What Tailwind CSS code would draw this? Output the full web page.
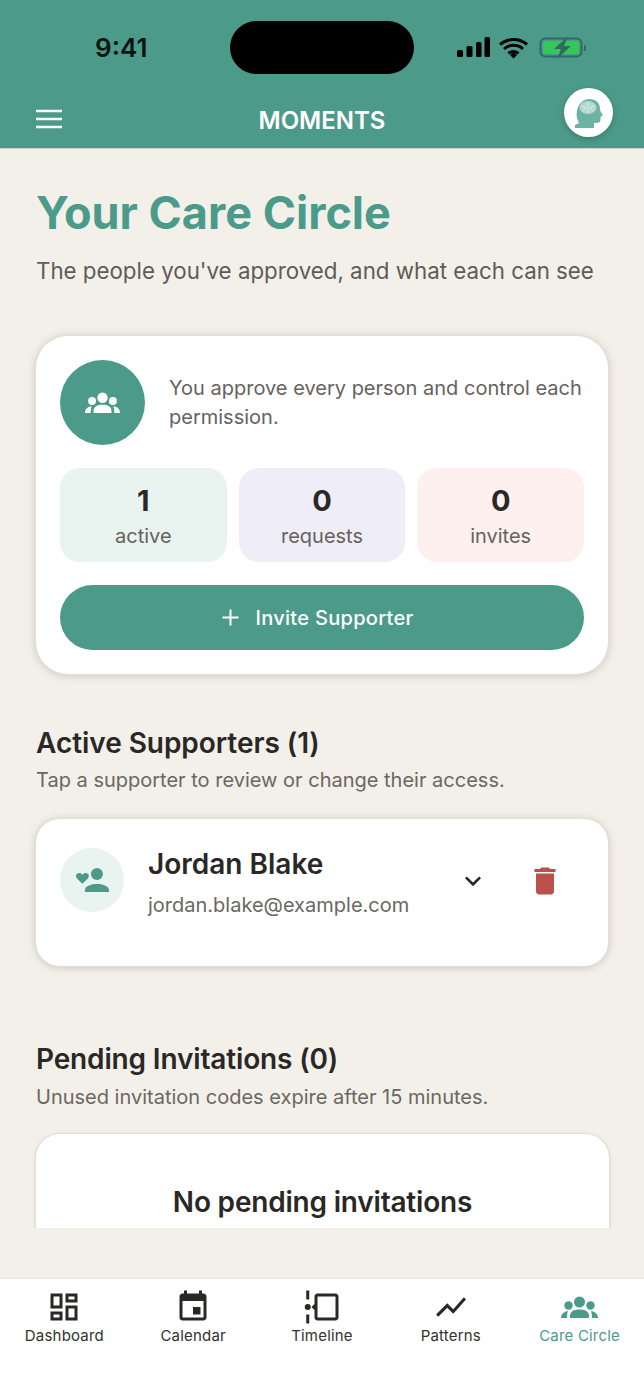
<!DOCTYPE html>
<html lang="en">
<head>
<meta charset="utf-8">
<script src="https://cdn.jsdelivr.net/npm/@tailwindcss/browser@4"></script>
<title>Moments</title>
</head>
<body class="m-0 bg-[#f3f0ea] font-['Inter',sans-serif] text-[#2a2826]">
<div class="w-[644px] h-[1400px] flex flex-col overflow-hidden">
  <header class="h-[149px] shrink-0 bg-[#4c9a8a] border-b border-[#c9d3cd] flex flex-col">
    <div class="h-[94px] flex items-start relative">
      <span class="absolute left-[95px] top-[32px] text-[26px] leading-[32px] font-semibold text-[#0a1512]">9:41</span>
      <div class="absolute left-[230px] top-[21px] w-[184px] h-[53px] rounded-full bg-black"></div>
      <svg class="absolute left-[456px] top-[36px]" width="130" height="24" viewBox="0 0 130 24">
        <rect x="1" y="14" width="6" height="7" rx="1.500" fill="#000"/>
        <rect x="10.500" y="10" width="6" height="11" rx="1.500" fill="#000"/>
        <rect x="20" y="6" width="5.500" height="15" rx="1.500" fill="#000"/>
        <rect x="28.500" y="1" width="5.500" height="20" rx="1.500" fill="#000"/>
        <path d="M44 8.500 a21 21 0 0 1 27 0 M48 13 a14 14 0 0 1 19 0 M52.500 17.500 a7 7 0 0 1 10 0" fill="none" stroke="#000" stroke-width="3"/>
        <path d="M54 19 l3.500 -2.500 l3.500 2.500 l-3.500 3.500z" fill="#000"/>
        <rect x="84.500" y="2.500" width="41" height="18" rx="5" fill="none" stroke="#2f6b60" stroke-width="2"/>
        <rect x="87" y="5" width="36" height="13" rx="3" fill="#34c759"/>
        <path d="M128 9 a3 3 0 0 1 0 6z" fill="#2f6b60"/>
        <path d="M112 0 l-14 13 h7 l-4 10 l14 -13 h-7 l4 -10z" fill="#2f6b60"/>
      </svg>
    </div>
    <div class="h-[54px] flex items-center relative">
      <svg class="absolute left-[36px] top-[15px]" width="26" height="20" viewBox="0 0 26 20">
        <path d="M0 2 H26 M0 10 H26 M0 18 H26" stroke="#fff" stroke-width="2.600"/>
      </svg>
      <span class="w-full text-center text-[24px] leading-[30px] font-semibold text-white mt-[-1px]">MOMENTS</span>
      <div class="absolute left-[564px] top-[-6px] w-[49px] h-[49px] rounded-full bg-white shadow-[0_2px_6px_rgba(0,0,0,0.2)] flex items-center justify-center">
        <svg width="30" height="30" viewBox="0 0 30 30">
          <path d="M1 30 V27 C2 26 4 26 5 25 C3 21 2 18 3 13 C4 6 9 1 15 1 C22 1 26 5 26 11 C26 14 28 15 29 17 L26.500 19 V22 C26.500 24 25 25 22 25 H20 V30z" fill="#6db3a2"/>
          <ellipse cx="14" cy="9.500" rx="8.500" ry="6.500" fill="#b4d8ce"/>
          <path d="M14 4 V15 M8 8 L12 10 L9 13 M20 8 L16 10 L19 13" stroke="#e6f2ee" stroke-width="0.800" fill="none"/>
        </svg>
      </div>
    </div>
  </header>

  <main class="h-[1079px] shrink-0 overflow-hidden px-[36px]">
    <h1 class="mt-[37px] text-[45px] leading-[54px] font-bold text-[#4c9a8a] whitespace-nowrap">Your Care Circle</h1>
    <p class="mt-[17px] text-[22.3px] leading-[28px] text-[#5f5b56] whitespace-nowrap">The people you've approved, and what each can see</p>

    <section class="mt-[51px] w-[572px] rounded-[32px] bg-white p-[24px] shadow-[0_0_0_1px_#e3dfd7,0_1px_10px_rgba(90,80,60,0.3)]">
      <div class="flex items-center gap-[24px]">
        <div class="w-[85px] h-[85px] shrink-0 rounded-full bg-[#4c9a8a] flex items-center justify-center">
          <svg width="35" height="21" viewBox="0 0 37 22" fill="#fff"><circle cx="18.500" cy="6" r="5.500"/><circle cx="7.500" cy="9.500" r="4.200"/><circle cx="29.500" cy="9.500" r="4.200"/><path d="M9 22 V20 C9 15.500 13 13.500 18.500 13.500 S28 15.500 28 20 V22z"/><path d="M0 22 C0 18 3 15.500 7 15 C6.300 17 6 19 6 22z"/><path d="M37 22 C37 18 34 15.500 30 15 C30.700 17 31 19 31 22z"/></svg>
        </div>
        <p class="text-[20px] leading-[29px] text-[#66625d]">You approve every person and control each permission.</p>
      </div>
      <div class="mt-[23px] grid grid-cols-3 gap-[12px]">
        <div class="h-[94px] rounded-[20px] bg-[#e9f3f0] flex flex-col items-center pt-[15px]">
          <span class="text-[29px] leading-[36px] font-bold">1</span>
          <span class="text-[20px] leading-[26px] text-[#66625d] mt-[4px]">active</span>
        </div>
        <div class="h-[94px] rounded-[20px] bg-[#efedf8] flex flex-col items-center pt-[15px]">
          <span class="text-[29px] leading-[36px] font-bold">0</span>
          <span class="text-[20px] leading-[26px] text-[#66625d] mt-[4px]">requests</span>
        </div>
        <div class="h-[94px] rounded-[20px] bg-[#fdf0ee] flex flex-col items-center pt-[15px]">
          <span class="text-[29px] leading-[36px] font-bold">0</span>
          <span class="text-[20px] leading-[26px] text-[#66625d] mt-[4px]">invites</span>
        </div>
      </div>
      <button class="mt-[23px] w-full h-[65px] rounded-full bg-[#4c9a8a] flex items-center justify-center gap-[16px] pr-[8px] text-white text-[20px] font-medium">
        <svg width="17" height="17" viewBox="0 0 17 17"><path d="M8.500 0.500 V16.500 M0.500 8.500 H16.500" stroke="#fff" stroke-width="2"/></svg>
        <span class="tracking-[0.3px]">Invite Supporter</span>
      </button>
    </section>

    <h2 class="mt-[51px] text-[28px] leading-[36px] font-semibold tracking-[-0.05px]">Active Supporters (1)</h2>
    <p class="mt-[6px] text-[20px] leading-[26px] text-[#6b6762] whitespace-nowrap">Tap a supporter to review or change their access.</p>

    <section class="mt-[26px] w-[572px] h-[147px] rounded-[24px] bg-white flex items-start shadow-[0_0_0_1px_#e3dfd7,0_1px_8px_rgba(90,80,60,0.3)] pl-[24px] pt-[29px]">
      <div class="w-[64px] h-[64px] shrink-0 rounded-full bg-[#e9f3f0] flex items-center justify-center">
        <svg width="36" height="36" viewBox="0 0 24 24" fill="#4c9a8a"><circle cx="15.300" cy="8" r="4"/><path d="M7.300 20 V18.500 C7.300 16 12 14.700 15.300 14.700 S23.300 16 23.300 18.500 V20z"/><path d="M5.600 14.500 L2.300 11.300 C1 10 1 8.800 2 7.900 C3.200 7 4.800 7.300 5.600 8.600 C6.500 7.300 8 7 9.200 7.900 C10.200 8.800 10.200 10 8.900 11.300z"/></svg>
      </div>
      <div class="ml-[24px] w-[300px] mt-[-3px]">
        <div class="text-[28px] leading-[38px] font-semibold whitespace-nowrap">Jordan Blake</div>
        <div class="text-[20px] leading-[26px] text-[#6b6762] mt-[9px] whitespace-nowrap">jordan.blake@example.com</div>
      </div>
      <svg class="ml-[9px] mt-[17px]" width="32" height="32" viewBox="0 0 24 24" fill="#2a2826"><path d="M7.400 8.600 12 13.200l4.600-4.600L18 10l-6 6-6-6z"/></svg>
      <svg class="ml-[38px] mt-[15px]" width="36" height="36" viewBox="0 0 24 24" fill="#b9504a"><path d="M6 19c0 1.100.9 2 2 2h8c1.100 0 2-.9 2-2V7H6v12zM19 4h-3.500l-1-1h-5l-1 1H5v2h14V4z"/></svg>
    </section>

    <h2 class="mt-[75px] text-[28px] leading-[36px] font-semibold tracking-[-0.15px]">Pending Invitations (0)</h2>
    <p class="mt-[7px] text-[20px] leading-[26px] text-[#6b6762] whitespace-nowrap">Unused invitation codes expire after 15 minutes.</p>

    <section class="mt-[24px] w-[573px] h-[200px] rounded-[24px] bg-white text-center pt-[50px] shadow-[0_0_0_1px_#e3dfd7,0_1px_4px_rgba(90,80,60,0.25)]">
      <div class="text-[28px] leading-[36px] font-semibold tracking-[-0.2px]">No pending invitations</div>
    </section>
  </main>

  <div class="h-[50px] shrink-0"></div>

  <nav class="flex-1 bg-white border-t border-[#e8e6e1] grid grid-cols-5 pt-[10px]">
    <div class="flex flex-col items-center">
      <svg width="36" height="36" viewBox="0 0 24 24" fill="#2a2826"><path d="M19 5v2h-4V5h4M9 5v6H5V5h4m10 8v6h-4v-6h4M9 17v2H5v-2h4M21 3h-8v6h8V3zM11 3H3v10h8V3zm10 8h-8v10h8V11zm-10 4H3v6h8v-6z"/></svg>
      <span class="text-[15px] leading-[20px] tracking-[0.2px] text-[#33312e] mt-[1px]">Dashboard</span>
    </div>
    <div class="flex flex-col items-center">
      <svg width="36" height="36" viewBox="0 0 24 24" fill="#2a2826"><path d="M17 12h-5v5h5v-5zM16 1v2H8V1H6v2H5c-1.100 0-2 .9-2 2v14c0 1.100.9 2 2 2h14c1.100 0 2-.9 2-2V5c0-1.100-.9-2-2-2h-1V1h-2zm3 18H5V8h14v11z"/></svg>
      <span class="text-[15px] leading-[20px] tracking-[0.2px] text-[#33312e] mt-[1px]">Calendar</span>
    </div>
    <div class="flex flex-col items-center">
      <svg width="36" height="36" viewBox="0 0 24 24" fill="#2a2826"><path d="M23 5v14c0 1.100-.9 2-2 2H9c-1.100 0-2-.9-2-2v-5l-2-2 2-2V5c0-1.100.9-2 2-2h12c1.100 0 2 .9 2 2zm-2 0H9v14h12V5z"/><rect x="1.500" y="1" width="2" height="6"/><rect x="1.500" y="17" width="2" height="6"/><circle cx="2.500" cy="12" r="2"/></svg>
      <span class="text-[15px] leading-[20px] tracking-[0.2px] text-[#33312e] mt-[1px]">Timeline</span>
    </div>
    <div class="flex flex-col items-center">
      <svg width="36" height="36" viewBox="0 0 24 24" fill="#2a2826"><path d="M3.500 18.490l6-6.010 4 4L22 6.920l-1.410-1.410-7.090 7.970-4-4L2 16.990z"/></svg>
      <span class="text-[15px] leading-[20px] tracking-[0.2px] text-[#33312e] mt-[1px]">Patterns</span>
    </div>
    <div class="flex flex-col items-center">
      <svg class="my-[7px]" width="37" height="22" viewBox="0 0 37 22" fill="#4c9a8a"><circle cx="18.500" cy="6" r="5.500"/><circle cx="7.500" cy="9.500" r="4.200"/><circle cx="29.500" cy="9.500" r="4.200"/><path d="M9 22 V20 C9 15.500 13 13.500 18.500 13.500 S28 15.500 28 20 V22z"/><path d="M0 22 C0 18 3 15.500 7 15 C6.300 17 6 19 6 22z"/><path d="M37 22 C37 18 34 15.500 30 15 C30.700 17 31 19 31 22z"/></svg>
      <span class="text-[15px] leading-[20px] tracking-[0.2px] text-[#4c9a8a] mt-[1px]">Care Circle</span>
    </div>
  </nav>
</div>
</body>
</html>
